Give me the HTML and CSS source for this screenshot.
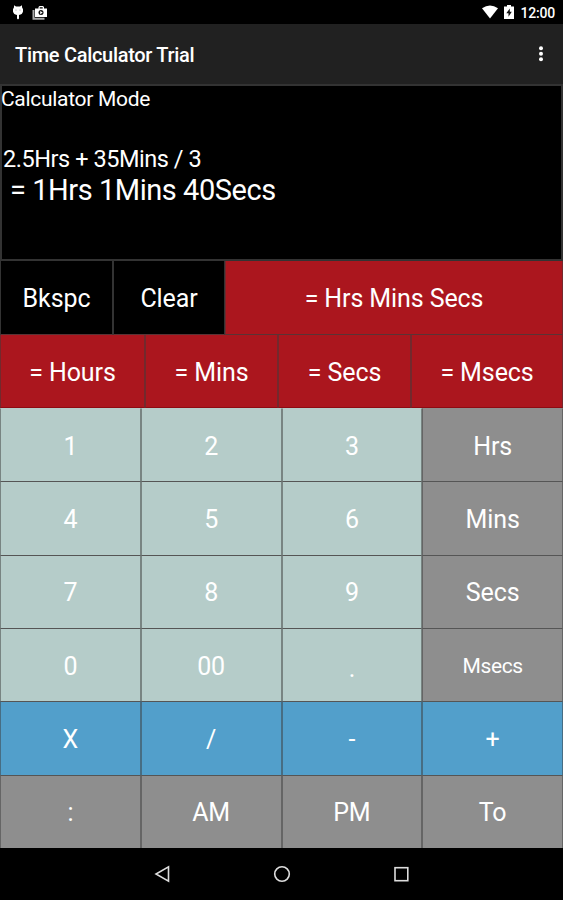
FILE: index.html
```html
<!DOCTYPE html>
<html lang="en">
<head>
    <meta charset="UTF-8">
    <meta name="viewport" content="width=device-width, initial-scale=1.0">
    <title>Time Calculator Trial</title>
    <link rel="stylesheet" href="styles.css">
</head>
<body>
    <div class="status-bar">
        <svg class="icon-debug" width="12" height="16" viewBox="0 0 12 16">
            <path d="M2 0.300L4 1.500h4L10 .3v2Q11.500 4 11 6.500Q10.400 9.500 7 10v3.500l-1 1-1-1V10Q1.600 9.500 1 6.500Q.5 4 2 2.300z" fill="#fff"/>
            <circle cx="4" cy="5" r=".6" fill="#999"/>
            <circle cx="8" cy="5" r=".6" fill="#999"/>
        </svg>
        <svg class="icon-store" width="16" height="16" viewBox="0 0 16 16">
            <path d="M1.500 5v8.700h11" fill="none" stroke="#aaa" stroke-width="2"/>
            <path d="M3 3.500h3.500V2l1-1h3.500l1 1v1.500h3V12H3zM7.700 2.200v1.300h3V2.200z" fill="#fff" fill-rule="evenodd"/>
            <circle cx="9" cy="7.600" r="2.500" fill="#111"/>
            <path d="M8.200 6v3.200l2.500-1.600z" fill="#fff"/>
        </svg>
        <div class="status-right">
            <svg width="18" height="14" viewBox="0 0 18 14">
                <path d="M1 3.300Q9-2.500 17 3.300L9 13.500z" fill="#fff"/>
            </svg>
            <svg class="icon-battery" width="10" height="14" viewBox="0 0 10 14">
                <path d="M0 1.500h3V0h4v1.500h3V14H0z" fill="#fff"/>
                <path d="M5.800 3.500L2.300 8.300h2.200v3.400l3.300-4.900H5.800z" fill="#111"/>
            </svg>
            <span class="clock">12:00</span>
        </div>
    </div>

    <div class="app-bar">
        <h1>Time Calculator Trial</h1>
        <svg class="menu" width="6" height="18" viewBox="0 0 6 18">
            <circle cx="3" cy="3.200" r="2" fill="#fff"/>
            <circle cx="3" cy="8.700" r="2" fill="#fff"/>
            <circle cx="3" cy="14.200" r="2" fill="#fff"/>
        </svg>
    </div>

    <div class="display">
        <div class="mode">Calculator Mode</div>
        <div class="expression">2.5Hrs + 35Mins / 3</div>
        <div class="result">= 1Hrs 1Mins 40Secs</div>
    </div>

    <div class="edit-row">
        <button class="black">Bkspc</button>
        <button class="black">Clear</button>
        <button class="red">= Hrs Mins Secs</button>
    </div>
    <div class="convert-row">
        <button class="red">= Hours</button>
        <button class="red">= Mins</button>
        <button class="red">= Secs</button>
        <button class="red">= Msecs</button>
    </div>

    <div class="keypad">
        <button class="number">1</button>
        <button class="number">2</button>
        <button class="number">3</button>
        <button class="unit">Hrs</button>
        <button class="number">4</button>
        <button class="number">5</button>
        <button class="number">6</button>
        <button class="unit">Mins</button>
        <button class="number">7</button>
        <button class="number">8</button>
        <button class="number">9</button>
        <button class="unit">Secs</button>
        <button class="number">0</button>
        <button class="number">00</button>
        <button class="number dot">.</button>
        <button class="unit small">Msecs</button>
        <button class="operator">X</button>
        <button class="operator">/</button>
        <button class="operator">-</button>
        <button class="operator">+</button>
        <button class="unit">:</button>
        <button class="unit">AM</button>
        <button class="unit">PM</button>
        <button class="unit">To</button>
    </div>

    <div class="nav-bar">
        <svg width="18" height="18" viewBox="0 0 18 18">
            <path d="M15.500 1.800v14.400L3 9z" fill="none" stroke="#ddd" stroke-width="1.600"/>
        </svg>
        <svg width="18" height="18" viewBox="0 0 18 18">
            <circle cx="9" cy="9" r="7.300" fill="none" stroke="#ddd" stroke-width="1.600"/>
        </svg>
        <svg width="18" height="18" viewBox="0 0 18 18">
            <rect x="2" y="2.700" width="12.800" height="13" fill="none" stroke="#ddd" stroke-width="1.600"/>
        </svg>
    </div>
</body>
</html>
```
FILE: styles.css
```css
body {
    font-family: Roboto, sans-serif;
    background-color: #000;
    color: #fff;
    margin: 0;
    height: 900px;
    display: flex;
    flex-direction: column;
    overflow: hidden;
}
svg {
    display: block;
}
.status-bar {
    height: 24px;
    box-sizing: border-box;
    padding: 0 8px 0 12px;
    display: flex;
    align-items: center;
}
.icon-debug {
    margin-top: 2px;
}
.icon-store {
    margin: 2px 0 0 8px;
}
.status-right {
    margin-left: auto;
    display: flex;
    align-items: center;
}
.icon-battery {
    margin-left: 5px;
}
.clock {
    font-size: 14px;
    font-weight: 500;
    line-height: 24px;
    letter-spacing: -0.2px;
    margin: 2px 0 0 6px;
}
.app-bar {
    height: 60px;
    background-color: #212121;
    padding: 0 19px 0 15px;
    display: flex;
    align-items: center;
    justify-content: space-between;
}
h1 {
    font-size: 20px;
    font-weight: 500;
    letter-spacing: -0.3px;
    margin: 1px 0 0;
}
.menu {
    margin-top: 0;
}
.display {
    height: 177px;
    box-sizing: border-box;
    border: 2px solid #333;
    white-space: nowrap;
}
.mode {
    font-size: 21px;
    line-height: 26px;
    letter-spacing: -0.3px;
    margin-left: -1px;
}
.expression {
    font-size: 23.5px;
    line-height: 30px;
    letter-spacing: -0.45px;
    margin: 32px 0 0 1px;
}
.result {
    font-size: 29px;
    line-height: 32px;
    letter-spacing: -0.45px;
    margin-left: 8px;
}
button {
    font-family: inherit;
    font-size: 25px;
    letter-spacing: -0.1px;
    color: #fff;
    padding: 2px 0 0;
    border: 1px solid rgba(60, 60, 60, 0.5);
    border-top-color: #555;
    border-bottom: none;
    border-radius: 0;
    cursor: pointer;
}
.edit-row {
    height: 74px;
    display: grid;
    grid-template-columns: 113px 112px 1fr;
}
.edit-row button {
    border-top: none;
    border-bottom: 1px solid #5a3335;
}
.convert-row {
    height: 73px;
    display: grid;
    grid-template-columns: 145px 133px 133px 1fr;
}
.convert-row button {
    border-top: none;
    border-bottom: 1px solid #8e0a12;
}
.keypad {
    height: 440px;
    display: grid;
    grid-template-columns: repeat(4, 1fr);
    grid-template-rows: repeat(6, 1fr);
}
.keypad button:nth-child(-n+4) {
    border-top-color: transparent;
}
.black {
    background-color: #000;
    border-color: #333;
}
.red {
    background-color: #ab161e;
}
.number {
    background-color: #b5ccc9;
}
.unit {
    background-color: #8e8e8e;
}
.operator {
    background-color: #529fcb;
}
.small {
    font-size: 21px;
    letter-spacing: -0.4px;
}
.dot {
    padding-top: 6px;
}
.nav-bar {
    flex: 1;
    display: flex;
    justify-content: center;
    align-items: center;
    gap: 102px;
}
```
